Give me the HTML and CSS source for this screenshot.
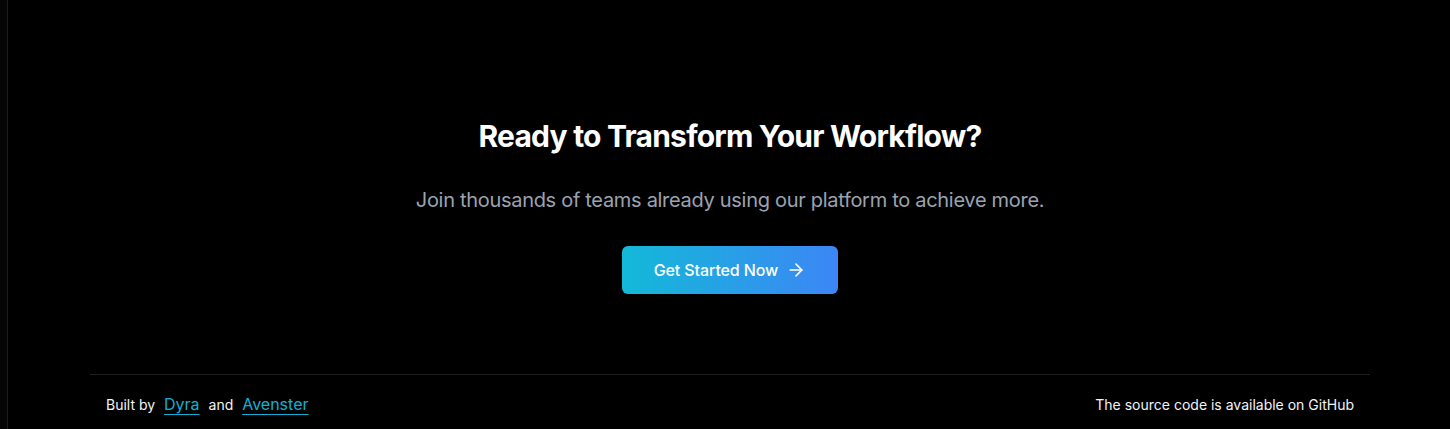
FILE: index.html
```html
<!DOCTYPE html>
<html lang="en">
<head>
<meta charset="utf-8">
<title>Ready to Transform Your Workflow?</title>
<link rel="stylesheet" href="styles.css">
</head>
<body>
<div class="page">
  <div class="rail"></div>
  <main class="main">
    <section class="cta">
      <h2 class="cta-title">Ready to Transform Your Workflow?</h2>
      <p class="cta-sub">Join thousands of teams already using our platform to achieve more.</p>
      <a class="cta-btn" href="#">
        <span>Get Started Now</span>
        <svg class="cta-icon" width="20" height="20" viewBox="0 0 24 24" fill="none" stroke="currentColor" stroke-width="2" stroke-linecap="round" stroke-linejoin="round"><path d="M5 12h14"/><path d="m12 5 7 7-7 7"/></svg>
      </a>
    </section>
    <footer class="footer">
      <p class="footer-left">Built by <a class="footer-link" href="#">Dyra</a> and <a class="footer-link" href="#">Avenster</a></p>
      <p class="footer-right">The source code is available on GitHub</p>
    </footer>
  </main>
</div>
</body>
</html>
```
FILE: styles.css
```css
* { box-sizing: border-box; }
html, body { margin: 0; padding: 0; background: #000; }
body {
  font-family: Inter, "Noto Sans", sans-serif;
  color: #fff;
  height: 429px;
  overflow: hidden;
}
.page {
  display: flex;
  height: 429px;
}
.rail {
  width: 8px;
  flex: none;
  background: #050506;
  border-right: 1px solid #1b1b28;
}
.main {
  flex: 1;
  display: flex;
  flex-direction: column;
  align-items: center;
  padding-left: 2px;
}
.cta {
  width: 1280px;
  padding: 118px 0 80px;
  display: flex;
  flex-direction: column;
  align-items: center;
}
.cta-title {
  margin: 0 0 32px;
  font-size: 30px;
  line-height: 36px;
  font-weight: 700;
  letter-spacing: -0.026em;
}
.cta-sub {
  margin: 0 0 32px;
  font-size: 20px;
  line-height: 28px;
  color: #9ca3af;
  letter-spacing: -0.3px;
}
.cta-btn {
  display: flex;
  align-items: center;
  gap: 8px;
  height: 48px;
  padding: 0 32px;
  border-radius: 6px;
  background: linear-gradient(90deg, #13b9d8, #3c86f5);
  color: #fff;
  text-decoration: none;
  font-size: 16px;
  font-weight: 500;
  letter-spacing: -0.1px;
}
.cta-icon { display: block; }
.footer {
  width: 1280px;
  border-top: 1px solid #1f1f1f;
  display: flex;
  justify-content: space-between;
  align-items: center;
  padding: 19px 16px 0;
  font-size: 14px;
  line-height: 20px;
}
.footer p { margin: 0; }
.footer-left { color: #f3f4f6; }
.footer-link {
  color: #0fb2d6;
  font-size: 16px;
  text-decoration: underline;
  text-underline-offset: 4px;
  margin: 0 5px;
}
.footer-right { color: #f3f4f6; }
```
